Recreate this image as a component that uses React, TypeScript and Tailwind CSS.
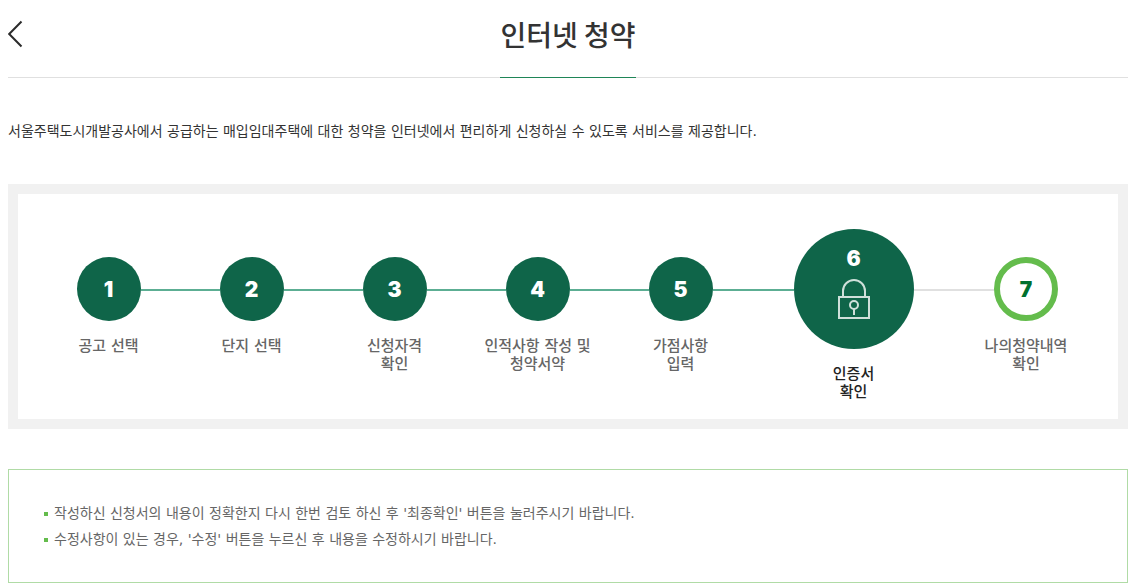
import { Fragment } from "react";

type Step = {
  label: string[];
  kind: "done" | "current" | "last";
};

const steps: Step[] = [
  { label: ["공고 선택"], kind: "done" },
  { label: ["단지 선택"], kind: "done" },
  { label: ["신청자격", "확인"], kind: "done" },
  { label: ["인적사항 작성 및", "청약서약"], kind: "done" },
  { label: ["가점사항", "입력"], kind: "done" },
  { label: ["인증서", "확인"], kind: "current" },
  { label: ["나의청약내역", "확인"], kind: "last" },
];

const notes = [
  "작성하신 신청서의 내용이 정확한지 다시 한번 검토 하신 후 '최종확인' 버튼을 눌러주시기 바랍니다.",
  "수정사항이 있는 경우, '수정' 버튼을 누르신 후 내용을 수정하시기 바랍니다.",
];

function LockIcon() {
  return (
    <svg
      width="32"
      height="41"
      viewBox="0 0 32 41"
      fill="none"
      stroke="#cfe0da"
      strokeWidth="2"
      aria-hidden="true"
    >
      <path d="M5 18V12a11 11 0 0 1 22 0v6" />
      <rect x="1" y="18" width="30" height="21" />
      <circle cx="16" cy="26" r="4" />
      <path d="M16 30V36" />
    </svg>
  );
}

function StepCircle({ step, number }: { step: Step; number: number }) {
  const digit = "font-['Inter',sans-serif] text-[21px] leading-6 font-black";
  if (step.kind === "current") {
    return (
      <div className="flex size-[120px] shrink-0 flex-col items-center gap-2 rounded-full bg-[#0f6549] pt-[18px] text-white">
        <span className={digit}>{number}</span>
        <LockIcon />
      </div>
    );
  }
  return (
    <div
      className={
        step.kind === "last"
          ? "flex size-16 shrink-0 items-center justify-center rounded-full border-6 border-[#64bc4c] pt-0.5 text-[#00702d]"
          : "flex size-16 shrink-0 items-center justify-center rounded-full bg-[#0f6549] pt-0.5 text-white"
      }
    >
      <span className={digit}>{number}</span>
    </div>
  );
}

function connector(index: number) {
  if (index < 0 || index >= steps.length - 1) return "bg-transparent";
  return steps[index].kind === "done" ? "bg-[#5cae93]" : "bg-[#e0e0e0]";
}

export default function App() {
  return (
    <main className="bg-white pr-1 pl-2 font-['DejaVu_Sans','Noto_Sans_CJK_KR',sans-serif] text-sm text-[#333]">
      <header className="grid h-[78px] grid-cols-[1fr_auto_1fr] border-b border-[#e0e0e0]">
        <button
          type="button"
          aria-label="뒤로"
          className="mt-5 flex h-7 w-4 items-center"
        >
          <svg width="16" height="28" viewBox="0 0 16 28" fill="none" stroke="#2b2b2b" strokeWidth="2">
            <path d="M13.5 1.5L1.2 14L13.5 26.5" />
          </svg>
        </button>
        <h1 className="-mb-px border-b border-[#1f8557] pt-3.5 font-['Noto_Sans_CJK_KR',sans-serif] text-[28px] leading-10 font-medium">
          인터넷 청약
        </h1>
      </header>

      <p className="mt-10 leading-[26px]">
        서울주택도시개발공사에서 공급하는 매입임대주택에 대한 청약을 인터넷에서 편리하게 신청하실 수 있도록
        서비스를 제공합니다.
      </p>

      <ol className="mt-10 grid grid-cols-[143fr_143fr_143fr_143fr_143fr_203fr_142fr] border-10 border-[#f1f1f1] pt-[35px] pr-[21px] pb-[18px] pl-[19px]">
        {steps.map((step, i) => (
          <li
            key={i}
            aria-current={step.kind === "current" ? "step" : undefined}
            className={step.kind === "current" ? "" : "pt-7"}
          >
            <div className="flex items-center">
              <span className={`mt-0.5 h-0.5 flex-1 ${connector(i - 1)}`} />
              <StepCircle step={step} number={i + 1} />
              <span className={`mt-0.5 h-0.5 flex-1 ${connector(i)}`} />
            </div>
            <p
              className={`mt-4 text-center text-[15px] leading-[18px] font-medium ${
                step.kind === "current" ? "text-[#222]" : "text-[#666]"
              }`}
            >
              {step.label.map((line, n) => (
                <Fragment key={line}>
                  {n > 0 && <br />}
                  {line}
                </Fragment>
              ))}
            </p>
          </li>
        ))}
      </ol>

      <ul className="mt-10 border border-[#b0dba6] px-[35px] py-[30px] leading-[26px] text-[#666]">
        {notes.map((note) => (
          <li key={note} className="flex gap-1.5">
            <span className="mt-3 size-1 shrink-0 bg-[#64bc4c]" />
            {note}
          </li>
        ))}
      </ul>
    </main>
  );
}
